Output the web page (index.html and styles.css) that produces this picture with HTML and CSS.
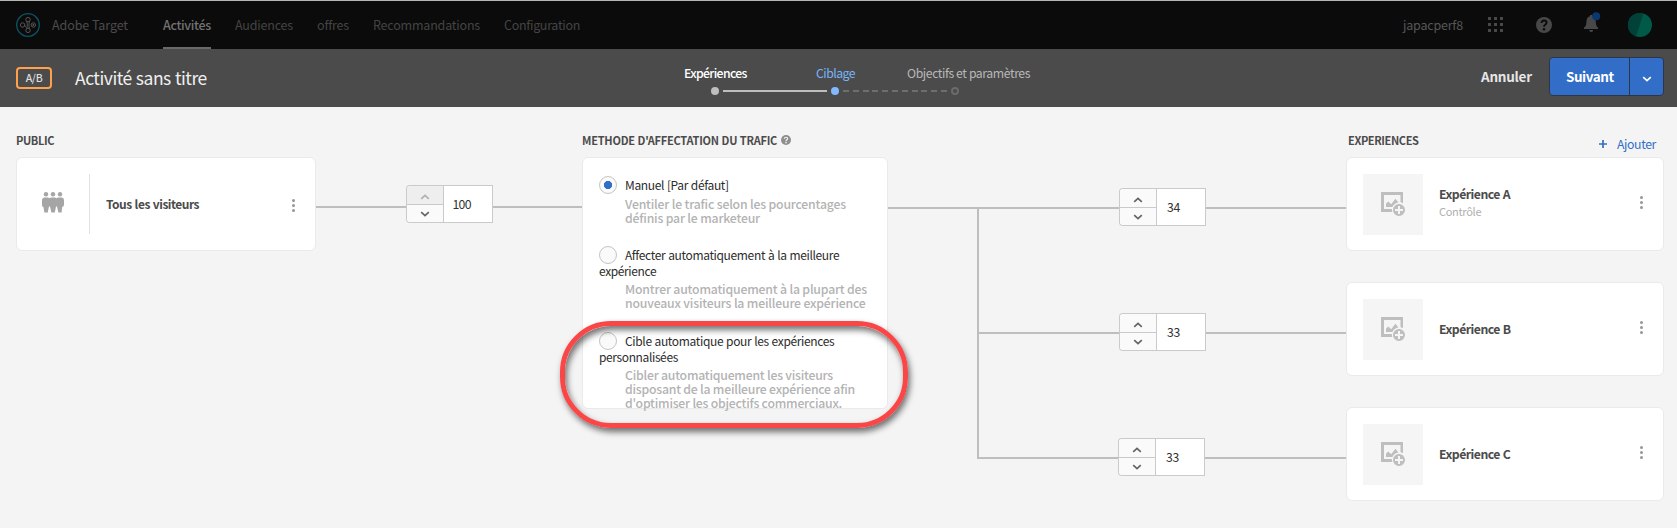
FILE: index.html
```
<!DOCTYPE html>
<html lang="fr">
<head>
<meta charset="utf-8">
<title>Adobe Target</title>
<link rel="stylesheet" href="styles.css">
</head>
<body>
<svg class="sprite" width="0" height="0">
  <symbol id="up" viewBox="0 0 10 6"><path d="M1.2 4.8 5 1.4 8.8 4.8" fill="none" stroke="currentColor" stroke-width="1.7"/></symbol>
  <symbol id="down" viewBox="0 0 10 6"><path d="M1.2 1.2 5 4.6 8.8 1.2" fill="none" stroke="currentColor" stroke-width="1.7"/></symbol>
  <symbol id="more" viewBox="0 0 3 13"><circle cx="1.5" cy="1.5" r="1.5"/><circle cx="1.5" cy="6.5" r="1.5"/><circle cx="1.5" cy="11.5" r="1.5"/></symbol>
  <symbol id="image-add" viewBox="0 0 25 25">
    <path d="M0 0h22v11.2a7.400 7.400 0 0 0-2.500-.9V3H3v14h7.800a7.400 7.400 0 0 0 .6 3H0z"/>
    <path d="M5 15v-3.200L7.200 9.600l3 2.600 4.200-5.400 3 3.600a7.400 7.400 0 0 0-6 4.600z"/>
    <path fill-rule="evenodd" d="M18 12a6 6 0 1 1 0 12 6 6 0 0 1 0-12zm-1 2v3h-3v2h3v3h2v-3h3v-2h-3v-3z"/>
  </symbol>
</svg>

<header class="topbar">
  <svg class="logo" width="24" height="24" viewBox="0 0 24 24" fill="none">
    <circle cx="12" cy="12" r="11.300" stroke="#0c5566" stroke-width="1.300"/>
    <g stroke="#5c5c5c" stroke-width=".9"><circle cx="12" cy="6.600" r="2.200"/><circle cx="6.600" cy="12" r="2.200"/><circle cx="17.300" cy="12" r="2.200"/><circle cx="12" cy="17.400" r="2.200"/><path d="M10.600 8.400c1 2.400 1 4.800 0 7.200M13.400 8.400c-.6 2.400-.6 4.800 0 7.200M8.600 12.600q1 .4 1.600 1.600"/></g>
    <circle cx="17.300" cy="12" r=".9" fill="#5c5c5c"/>
  </svg>
  <span class="brand">Adobe Target</span>
  <nav class="nav">
    <a class="nav-item nav-active">Activités</a>
    <a class="nav-item">Audiences</a>
    <a class="nav-item nav-offers">offres</a>
    <a class="nav-item nav-reco">Recommandations</a>
    <a class="nav-item nav-config">Configuration</a>
  </nav>
  <div class="tools">
    <span class="user">japacperf8</span>
    <svg class="apps" width="16" height="16" viewBox="0 0 16 16"><path d="M0 0h3v3H0zM6 0h3v3H6zM12 0h3v3h-3zM0 6h3v3H0zM6 6h3v3H6zM12 6h3v3h-3zM0 12h3v3H0zM6 12h3v3H6zM12 12h3v3h-3z"/></svg>
    <svg class="help" width="16" height="16" viewBox="0 0 16 16"><circle cx="8" cy="8" r="8"/><path d="M5.400 6.100C5.400 2.600 10.600 2.900 10.600 5.800 10.600 7.600 8 7.600 8 9.800" fill="none" stroke="#0b0b0b" stroke-width="1.900"/><circle cx="8" cy="12.200" r="1.250" fill="#0b0b0b"/></svg>
    <svg class="bell" width="17" height="20" viewBox="0 0 17 20"><path d="M0 17v-1.400c1.600-1 2.200-2.400 2.400-5.100C2.600 6.600 3.500 5 6 4.300V3h2.400v1.300C10.800 5 11.600 6.600 11.800 10.500c.2 2.700.8 4.100 2.200 5.100V17zM5.200 18h4a2 2 0 0 1-4 0z"/><circle cx="12.200" cy="4.300" r="4" fill="#0b3670"/></svg>
    <svg class="avatar" width="24" height="24" viewBox="0 0 24 24"><circle cx="12" cy="12" r="12" fill="#015a48"/><path d="M15.500.5A12 12 0 1 0 8 23.300z" fill="#024137"/></svg>
  </div>
</header>

<section class="titlebar">
  <span class="badge">A/B</span>
  <h1 class="title">Activité sans titre</h1>
  <div class="steps">
    <div class="step-labels">
      <span class="step step-done">Expériences</span>
      <span class="step step-current">Ciblage</span>
      <span class="step">Objectifs et paramètres</span>
    </div>
    <div class="track"><i class="dot dot-done"></i><i class="bar"></i><i class="dot dot-current"></i><i class="bar bar-next"></i><i class="dot dot-next"></i></div>
  </div>
  <div class="actions">
    <span class="cancel">Annuler</span>
    <div class="split"><span class="next">Suivant</span><span class="caret"><svg width="10" height="6"><use href="#down"/></svg></span></div>
  </div>
</section>

<main class="flow">
  <section class="audience">
    <div class="head"><h2>PUBLIC</h2></div>
    <div class="card audience-card">
      <div class="people">
        <svg width="22" height="21" viewBox="0 0 22 21"><circle cx="4" cy="2.300" r="2.200"/><circle cx="11" cy="2.300" r="2.200"/><circle cx="18" cy="2.300" r="2.200"/><path d="M2 5.500h4l1.500.8L9 5.500h4l1.500.8 1.500-.8h4q2 .6 2 2.600v5q-.2 1.800-1.800 1.800L19.600 20.500h-3.200L15 14.500h-1l-1.200 6H9.400L8 14.500H7l-1.300 6H2.400L1.400 15Q0 14.800 0 13V8q0-2 2-2.500z"/></svg>
      </div>
      <strong class="name">Tous les visiteurs</strong>
      <svg class="more" width="3" height="13"><use href="#more"/></svg>
    </div>
  </section>

  <div class="link">
    <i class="line"></i>
    <div class="stepper"><div class="arrows"><span class="arrow arrow-off"><svg width="10" height="6"><use href="#up"/></svg></span><span class="arrow"><svg width="10" height="6"><use href="#down"/></svg></span></div><span class="value value-full">100</span></div>
    <i class="line"></i>
  </div>

  <section class="method">
    <div class="head"><h2 class="method-title">METHODE D'AFFECTATION DU TRAFIC</h2><svg class="hint" width="10" height="10" viewBox="0 0 16 16"><circle cx="8" cy="8" r="8" fill="#8e8e8e"/><path d="M5.400 6.100C5.400 2.600 10.600 2.900 10.600 5.800 10.600 7.600 8 7.600 8 9.800" fill="none" stroke="#f4f4f4" stroke-width="1.900"/><circle cx="8" cy="12.200" r="1.250" fill="#f4f4f4"/></svg></div>
    <div class="card method-card">
      <div class="option">
        <div class="choice"><i class="radio radio-on"></i><span>Manuel [Par défaut]</span></div>
        <p class="desc">Ventiler le trafic selon les pourcentages<br>définis par le marketeur</p>
      </div>
      <div class="option">
        <div class="choice"><i class="radio"></i><span>Affecter automatiquement à la meilleure</span></div>
        <div class="choice-rest">expérience</div>
        <p class="desc">Montrer automatiquement à la plupart des<br>nouveaux visiteurs la meilleure expérience</p>
      </div>
      <div class="option">
        <div class="choice"><i class="radio"></i><span>Cible automatique pour les expériences</span></div>
        <div class="choice-rest">personnalisées</div>
        <p class="desc desc-last">Cibler automatiquement les visiteurs<br>disposant de la meilleure expérience afin<br>d'optimiser les objectifs commerciaux.</p>
      </div>
      <div class="callout"></div>
    </div>
  </section>

  <div class="branches">
    <i class="line stub"></i>
    <div class="fork">
      <div class="branch"><i class="line"></i><div class="stepper"><div class="arrows"><span class="arrow"><svg width="10" height="6"><use href="#up"/></svg></span><span class="arrow"><svg width="10" height="6"><use href="#down"/></svg></span></div><span class="value">34</span></div><i class="line"></i></div>
      <div class="branch"><i class="line"></i><div class="stepper"><div class="arrows"><span class="arrow"><svg width="10" height="6"><use href="#up"/></svg></span><span class="arrow"><svg width="10" height="6"><use href="#down"/></svg></span></div><span class="value">33</span></div><i class="line"></i></div>
      <div class="branch branch-last"><i class="line"></i><div class="stepper"><div class="arrows"><span class="arrow"><svg width="10" height="6"><use href="#up"/></svg></span><span class="arrow"><svg width="10" height="6"><use href="#down"/></svg></span></div><span class="value">33</span></div><i class="line"></i></div>
    </div>
  </div>

  <section class="experiences">
    <div class="head head-exp"><h2>EXPERIENCES</h2><span class="add"><svg width="8" height="8" viewBox="0 0 8 8"><path d="M4 0v8M0 4h8" stroke="#326ec8" stroke-width="1.700"/></svg><span>Ajouter</span></span></div>
    <div class="card exp"><div class="thumb"><svg width="25" height="25"><use href="#image-add"/></svg></div><div class="exp-text"><strong>Expérience A</strong><small>Contrôle</small></div><svg class="more" width="3" height="13"><use href="#more"/></svg></div>
    <div class="card exp"><div class="thumb"><svg width="25" height="25"><use href="#image-add"/></svg></div><div class="exp-text"><strong>Expérience B</strong></div><svg class="more" width="3" height="13"><use href="#more"/></svg></div>
    <div class="card exp"><div class="thumb"><svg width="25" height="25"><use href="#image-add"/></svg></div><div class="exp-text"><strong>Expérience C</strong></div><svg class="more" width="3" height="13"><use href="#more"/></svg></div>
  </section>
</main>
</body>
</html>
```
FILE: styles.css
```
* { box-sizing: border-box; margin: 0; padding: 0; }
body {
  width: 1677px; height: 528px; overflow: hidden;
  background: #f4f4f4; color: #2c2c2c;
  font: 12.25px/18px "Noto Sans CJK SC", "Noto Sans", sans-serif;
  white-space: nowrap;
}
svg, i { display: block; flex: none; }
.sprite { position: absolute; }

.topbar {
  display: flex; height: 49px; padding: 0 25px 0 16px;
  background: #0b0b0b; border-top: 1px solid #b4b6b4; color: #4c4c4c;
  font-size: 12.5px; line-height: 48px;
}
.logo { margin-top: 12px; }
.brand { width: 76px; margin-left: 12px; letter-spacing: -.08px; }
.nav { display: flex; margin-left: 35px; color: #444; letter-spacing: -.2px; }
.nav-item { width: 48px; margin-right: 24px; }
.nav-active { font-weight: 500; color: #727272; box-shadow: inset 0 -2px #6a6a6a; letter-spacing: -.33px; }
.nav-item:nth-child(2) { width: 58px; }
.nav-item.nav-offers { width: 32px; }
.nav-item.nav-reco { width: 107px; }
.nav-item.nav-config { width: 76px; letter-spacing: -.31px; }
.tools { display: flex; margin-left: auto; fill: #484848; }
.user { width: 60px; color: #565656; letter-spacing: -.2px; }
.apps { margin: 16px 0 0 25px; }
.help { margin: 16px 0 0 32px; }
.bell { margin: 11px 0 0 32px; }
.avatar { margin: 12px 0 0 27px; }

.titlebar { display: flex; height: 58px; padding: 0 13px 0 16px; background: #4b4b4b; color: #fff; }
.badge {
  width: 36px; height: 22px; margin-top: 18px;
  border: 2px solid #ffa04b; border-radius: 4px;
  font-size: 10.5px; font-weight: 500; line-height: 18px; text-align: center; color: #dedede;
  letter-spacing: -.3px;
}
.title { width: 132px; margin-left: 23px; font-size: 17.5px; font-weight: 400; line-height: 58px; color: #f0f0f0; letter-spacing: -.5px; word-spacing: .7px; }
.steps { width: 345px; margin-left: 477px; padding-top: 15px; }
.step-labels { display: flex; }
.step { width: 122px; color: #b8b8b8; letter-spacing: -.42px; }
.step-done { width: 63px; margin-right: 69px; color: #fff; font-weight: 500; letter-spacing: -.65px; }
.step-current { width: 39px; margin-right: 52px; color: #78b4fa; letter-spacing: -.52px; }
.track { display: flex; align-items: center; margin: 5px 0 0 27px; }
.dot { width: 8px; height: 8px; border-radius: 50%; }
.dot-done { background: #bebebe; }
.dot-current { background: #82b9ff; }
.dot-next { border: 2px solid #6b6b6b; }
.bar { width: 104px; height: 2px; margin: 0 4px; background: #bebebe; }
.bar-next { background: repeating-linear-gradient(90deg, #6e6e6e 0 6px, transparent 6px 9.800px); }
.actions { display: flex; margin-left: auto; font-size: 13.5px; font-weight: 700; }
.cancel { width: 51px; margin: 18px 17px 0 0; color: #e6e6e6; letter-spacing: -.25px; }
.split {
  display: flex; width: 115px; height: 39px; margin-top: 8px;
  background: #326ec8; border: 1px solid #2c3646; border-radius: 4px; line-height: 37px;
}
.next { width: 80px; padding-left: 16px; border-right: 1px solid #2c3646; letter-spacing: -.45px; }
.caret { flex: 1; padding: 18px 0 0 12px; }

.flow { display: flex; height: 421px; padding: 0 13px 0 16px; }
.head { display: flex; height: 50px; padding-top: 24px; }
h2 { font-size: 11px; font-weight: 700; line-height: 19px; color: #4b4b4b; letter-spacing: -.38px; }
.method-title { width: 195px; letter-spacing: -.22px; word-spacing: .4px; }
.card { background: #fff; border: 1px solid #eaeaea; border-radius: 6px; }
.more { fill: #969696; }
.line { flex: 1; height: 2px; background: #bebebe; }
.stepper { display: flex; flex: none; width: 87px; height: 38px; color: #323232; }
.arrows { width: 37px; border: 1px solid #cacaca; border-right: 0; border-radius: 4px 0 0 4px; overflow: hidden; }
.arrow { display: block; height: 18px; padding: 8px 0 0 13px; background: #fafafa; color: #646464; }
.arrow + .arrow { border-top: 1px solid #cacaca; padding-top: 6px; }
.arrow-off { background: #eee; color: #b0b0b0; }
.value { width: 50px; padding-left: 10px; background: #fff; border: 1px solid #cacaca; line-height: 37px; letter-spacing: -.3px; }
.value-full { padding-left: 9px; letter-spacing: -.7px; }

.audience { width: 300px; }
.audience-card { display: flex; height: 94px; padding: 16px 0 0; }
.people { width: 73px; height: 60px; padding: 18px 0 0 25px; border-right: 1px solid #e1e1e1; fill: #a5a5a5; }
.name { width: 93px; margin-left: 16px; font-size: 12px; line-height: 60px; color: #4b4b4b; letter-spacing: -.5px; word-spacing: .8px; }
.audience-card .more { margin: 25px 0 0 93px; }

.link { display: flex; width: 266px; padding-top: 78px; }
.link .line { margin-top: 21px; }

.method { width: 306px; }
.hint { margin: 4px 0 0 4px; }
.method-card { position: relative; height: 252px; padding: 18px 0 0 16px; }
.option { margin-bottom: 21px; }
.option:nth-child(2) { margin-bottom: 22px; }
.choice { display: flex; height: 18px; gap: 8px; font-size: 12px; letter-spacing: -.35px; word-spacing: .5px; }
.choice-rest { height: 16px; margin-top: -1px; font-size: 12px; line-height: 16px; letter-spacing: -.38px; }
.radio { width: 18px; height: 18px; background: #fafafa; border: 1px solid #c4c4c4; border-radius: 50%; }
.radio-on { background: radial-gradient(circle, #326ec8 3.800px, #fafafa 4.400px); }
.desc { margin: 3px 0 0 26px; line-height: 14px; color: #b3b3b3; font-weight: 500; letter-spacing: -.18px; }
.desc-last { letter-spacing: -.22px; }
/* highlight ring over the third option */
.callout {
  position: absolute; left: -23px; top: 163px; width: 348px; height: 107px;
  border: 5px solid #fa4646; border-radius: 51px;
  box-shadow: 2px 4px 6px rgba(0,0,0,.55), inset 2px 4px 6px rgba(0,0,0,.55);
}

.branches { display: flex; width: 458px; padding-top: 100px; }
.stub { flex: 0 0 89px; }
.fork { flex: 1; height: 252px; border-left: 2px solid #bebebe; }
.branch { display: flex; height: 125px; }
.branch .stepper { margin-top: -19px; }
.branch .line:last-child { flex: 0 0 140px; }
.branch-last { height: 2px; }
.branch-last .line:last-child { flex-basis: 141px; }

.experiences { width: 318px; }
.head-exp { padding-left: 2px; }
.add { display: flex; width: 57px; gap: 10px; margin: 4px 8px 0 auto; color: #326ec8; letter-spacing: -.38px; }
.add svg { margin-top: 5px; }
.exp { display: flex; height: 94px; margin-bottom: 31px; padding: 16px 0 0 16px; }
.exp:last-child { margin-bottom: 0; }
.thumb { width: 60px; height: 61px; padding: 18px; background: #f5f5f5; fill: #bebebe; }
.exp-text { width: 72px; margin: 21px 0 0 16px; }
.exp-text strong { display: block; color: #4b4b4b; letter-spacing: -.52px; word-spacing: .5px; }
.exp:nth-child(2) .exp-text { margin-top: 11px; }
.exp-text small { display: block; font-size: 11px; line-height: 16px; color: #b0b0b0; letter-spacing: -.3px; }
.exp .more { margin: 22px 0 0 129px; }
```
